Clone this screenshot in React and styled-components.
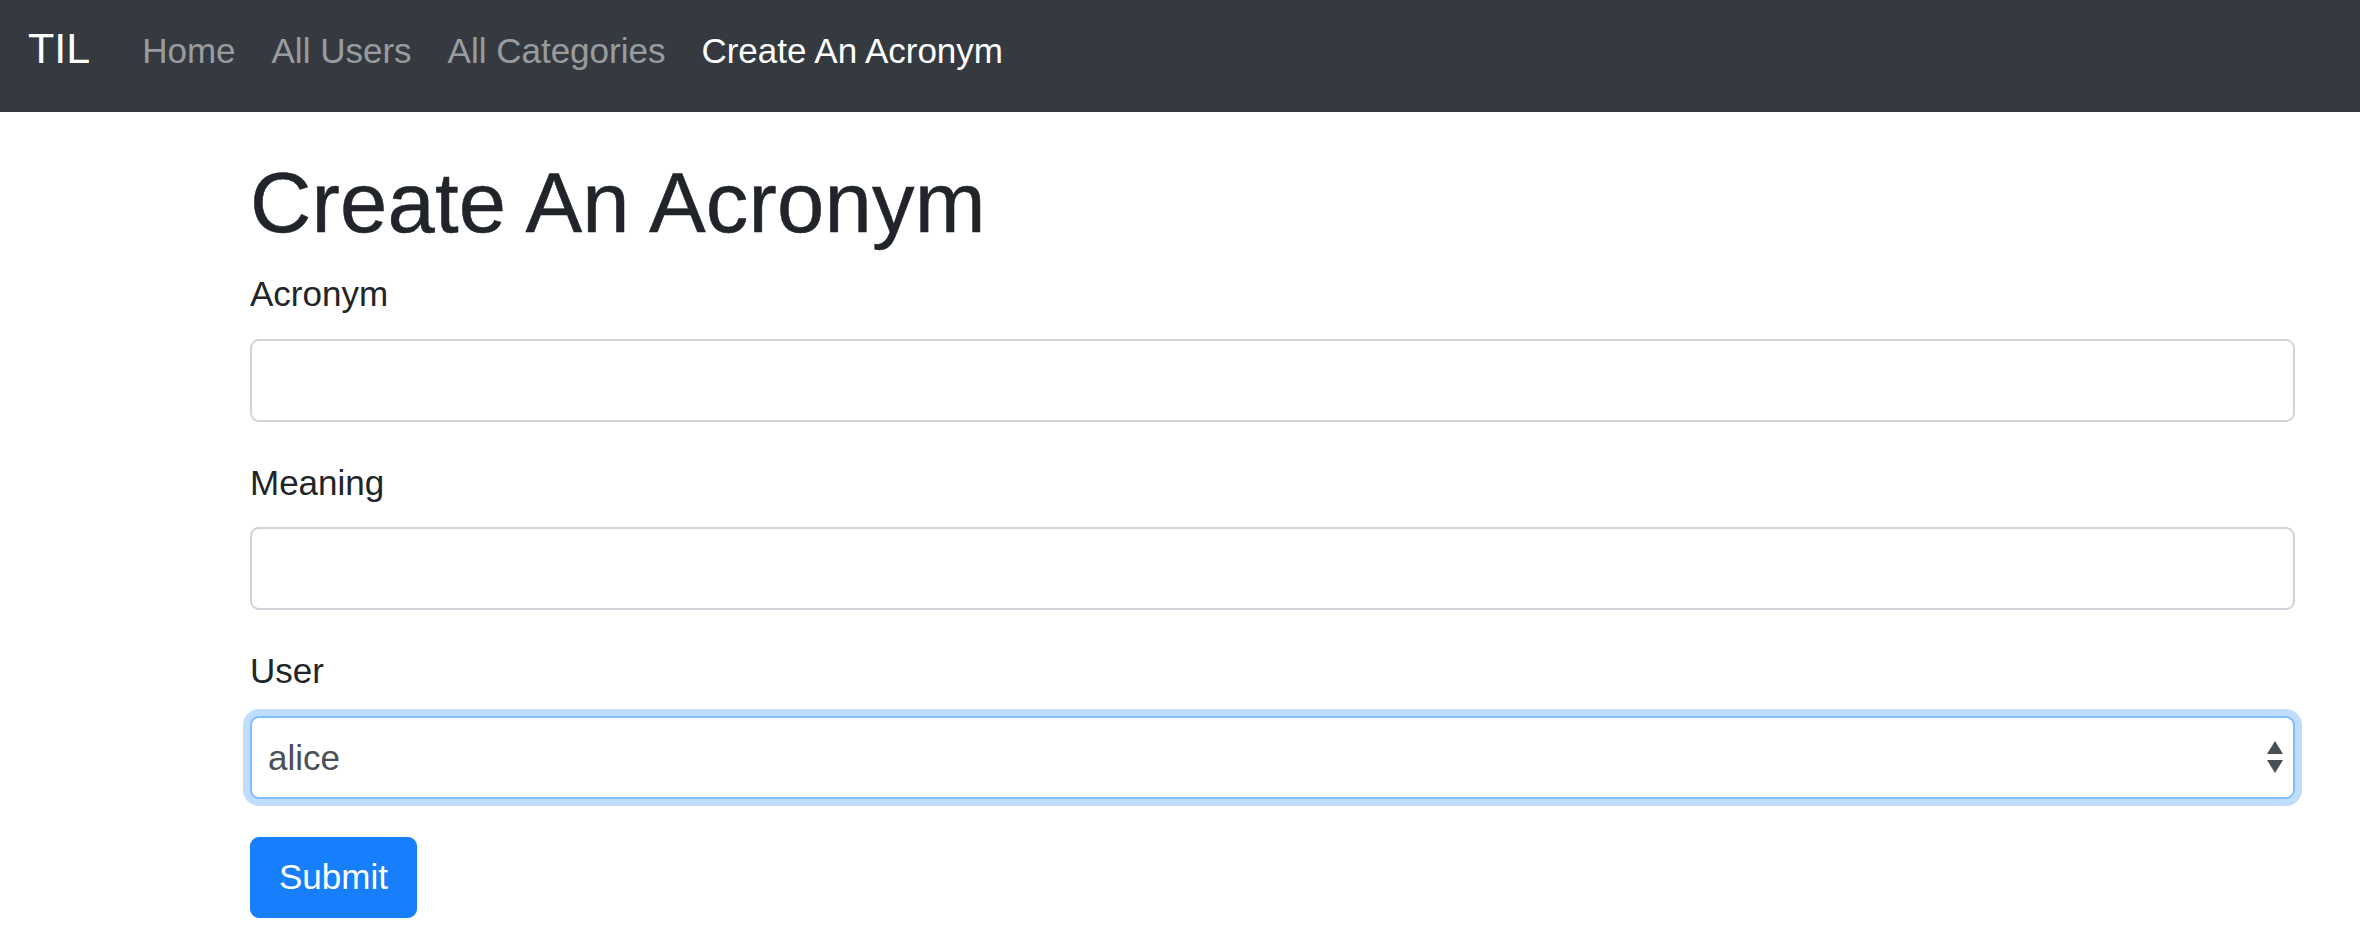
import React from 'react';
import styled, { createGlobalStyle } from 'styled-components';

const GlobalStyle = createGlobalStyle`
  html, body {
    margin: 0;
    padding: 0;
    background: #fff;
  }
  body {
    font-family: "Liberation Sans", Arial, sans-serif;
    color: #212529;
  }
  * {
    box-sizing: border-box;
  }
`;

const Navbar = styled.nav`
  height: 112px;
  background: #343a40;
  display: flex;
  align-items: baseline;
  padding: 16px 35px 0 28px;
`;

const Brand = styled.a`
  font-size: 43px;
  line-height: 1.5;
  color: #fff;
  margin-right: 34px;
  text-decoration: none;
`;

const NavList = styled.ul`
  display: flex;
  align-items: baseline;
  list-style: none;
  margin: 0;
  padding: 0;
`;

const NavLink = styled.a`
  display: block;
  font-size: 35px;
  line-height: 1.5;
  padding: 0 18px;
  text-decoration: none;
  color: ${(p) => (p.$active ? '#fff' : 'rgba(255, 255, 255, 0.5)')};
`;

const Container = styled.main`
  padding: 0 65px 0 250px;
`;

const Title = styled.h1`
  font-size: 85px;
  font-weight: 500;
  line-height: 1.2;
  letter-spacing: 0.2px;
  -webkit-text-stroke: 0.5px #212529;
  margin: 40px 0 14px;
  color: #212529;
`;

const FormGroup = styled.div`
  margin-bottom: 35px;
`;

const Label = styled.label`
  display: block;
  font-size: 35px;
  line-height: 1.5;
  margin-bottom: 18px;
`;

const Input = styled.input`
  display: block;
  width: 100%;
  height: 83px;
  padding: 8px 26px;
  font-family: inherit;
  font-size: 35px;
  color: #495057;
  background: #fff;
  border: 2px solid #ced4da;
  border-radius: 9px;
  outline: none;
`;

const SelectWrap = styled.div`
  position: relative;
`;

const Select = styled.select`
  display: block;
  width: 100%;
  height: 83px;
  padding: 0 60px 0 16px;
  font-family: inherit;
  font-size: 35px;
  color: #495057;
  background: #fff;
  border: 2px solid #80bdff;
  border-radius: 9px;
  box-shadow: 0 0 0 7px rgba(0, 123, 255, 0.25);
  appearance: none;
  -webkit-appearance: none;
  outline: none;
`;

const Arrows = styled.svg`
  position: absolute;
  right: 12px;
  top: 50%;
  transform: translateY(-50%);
  pointer-events: none;
`;

const SubmitButton = styled.button`
  display: inline-block;
  margin-top: 3px;
  font-family: inherit;
  font-size: 35px;
  line-height: 1.5;
  padding: 13.5px 28px;
  color: #fff;
  background: #177ffb;
  border: 1px solid #177ffb;
  border-radius: 9px;
  cursor: pointer;
`;

export default function App() {
  return (
    <>
      <GlobalStyle />
      <Navbar>
        <Brand href="#">TIL</Brand>
        <NavList>
          <li><NavLink href="#">Home</NavLink></li>
          <li><NavLink href="#">All Users</NavLink></li>
          <li><NavLink href="#">All Categories</NavLink></li>
          <li><NavLink href="#" $active>Create An Acronym</NavLink></li>
        </NavList>
      </Navbar>
      <Container>
        <Title>Create An Acronym</Title>
        <form onSubmit={(e) => e.preventDefault()}>
          <FormGroup>
            <Label htmlFor="short">Acronym</Label>
            <Input id="short" type="text" />
          </FormGroup>
          <FormGroup>
            <Label htmlFor="long">Meaning</Label>
            <Input id="long" type="text" />
          </FormGroup>
          <FormGroup>
            <Label htmlFor="userID">User</Label>
            <SelectWrap>
              <Select id="userID" defaultValue="alice">
                <option value="alice">alice</option>
              </Select>
              <Arrows width="16" height="32" viewBox="0 0 16 32">
                <polygon points="8,0 16,13 0,13" fill="#4a4f57" />
                <polygon points="0,19 16,19 8,32" fill="#4a4f57" />
              </Arrows>
            </SelectWrap>
          </FormGroup>
          <SubmitButton type="submit">Submit</SubmitButton>
        </form>
      </Container>
    </>
  );
}
